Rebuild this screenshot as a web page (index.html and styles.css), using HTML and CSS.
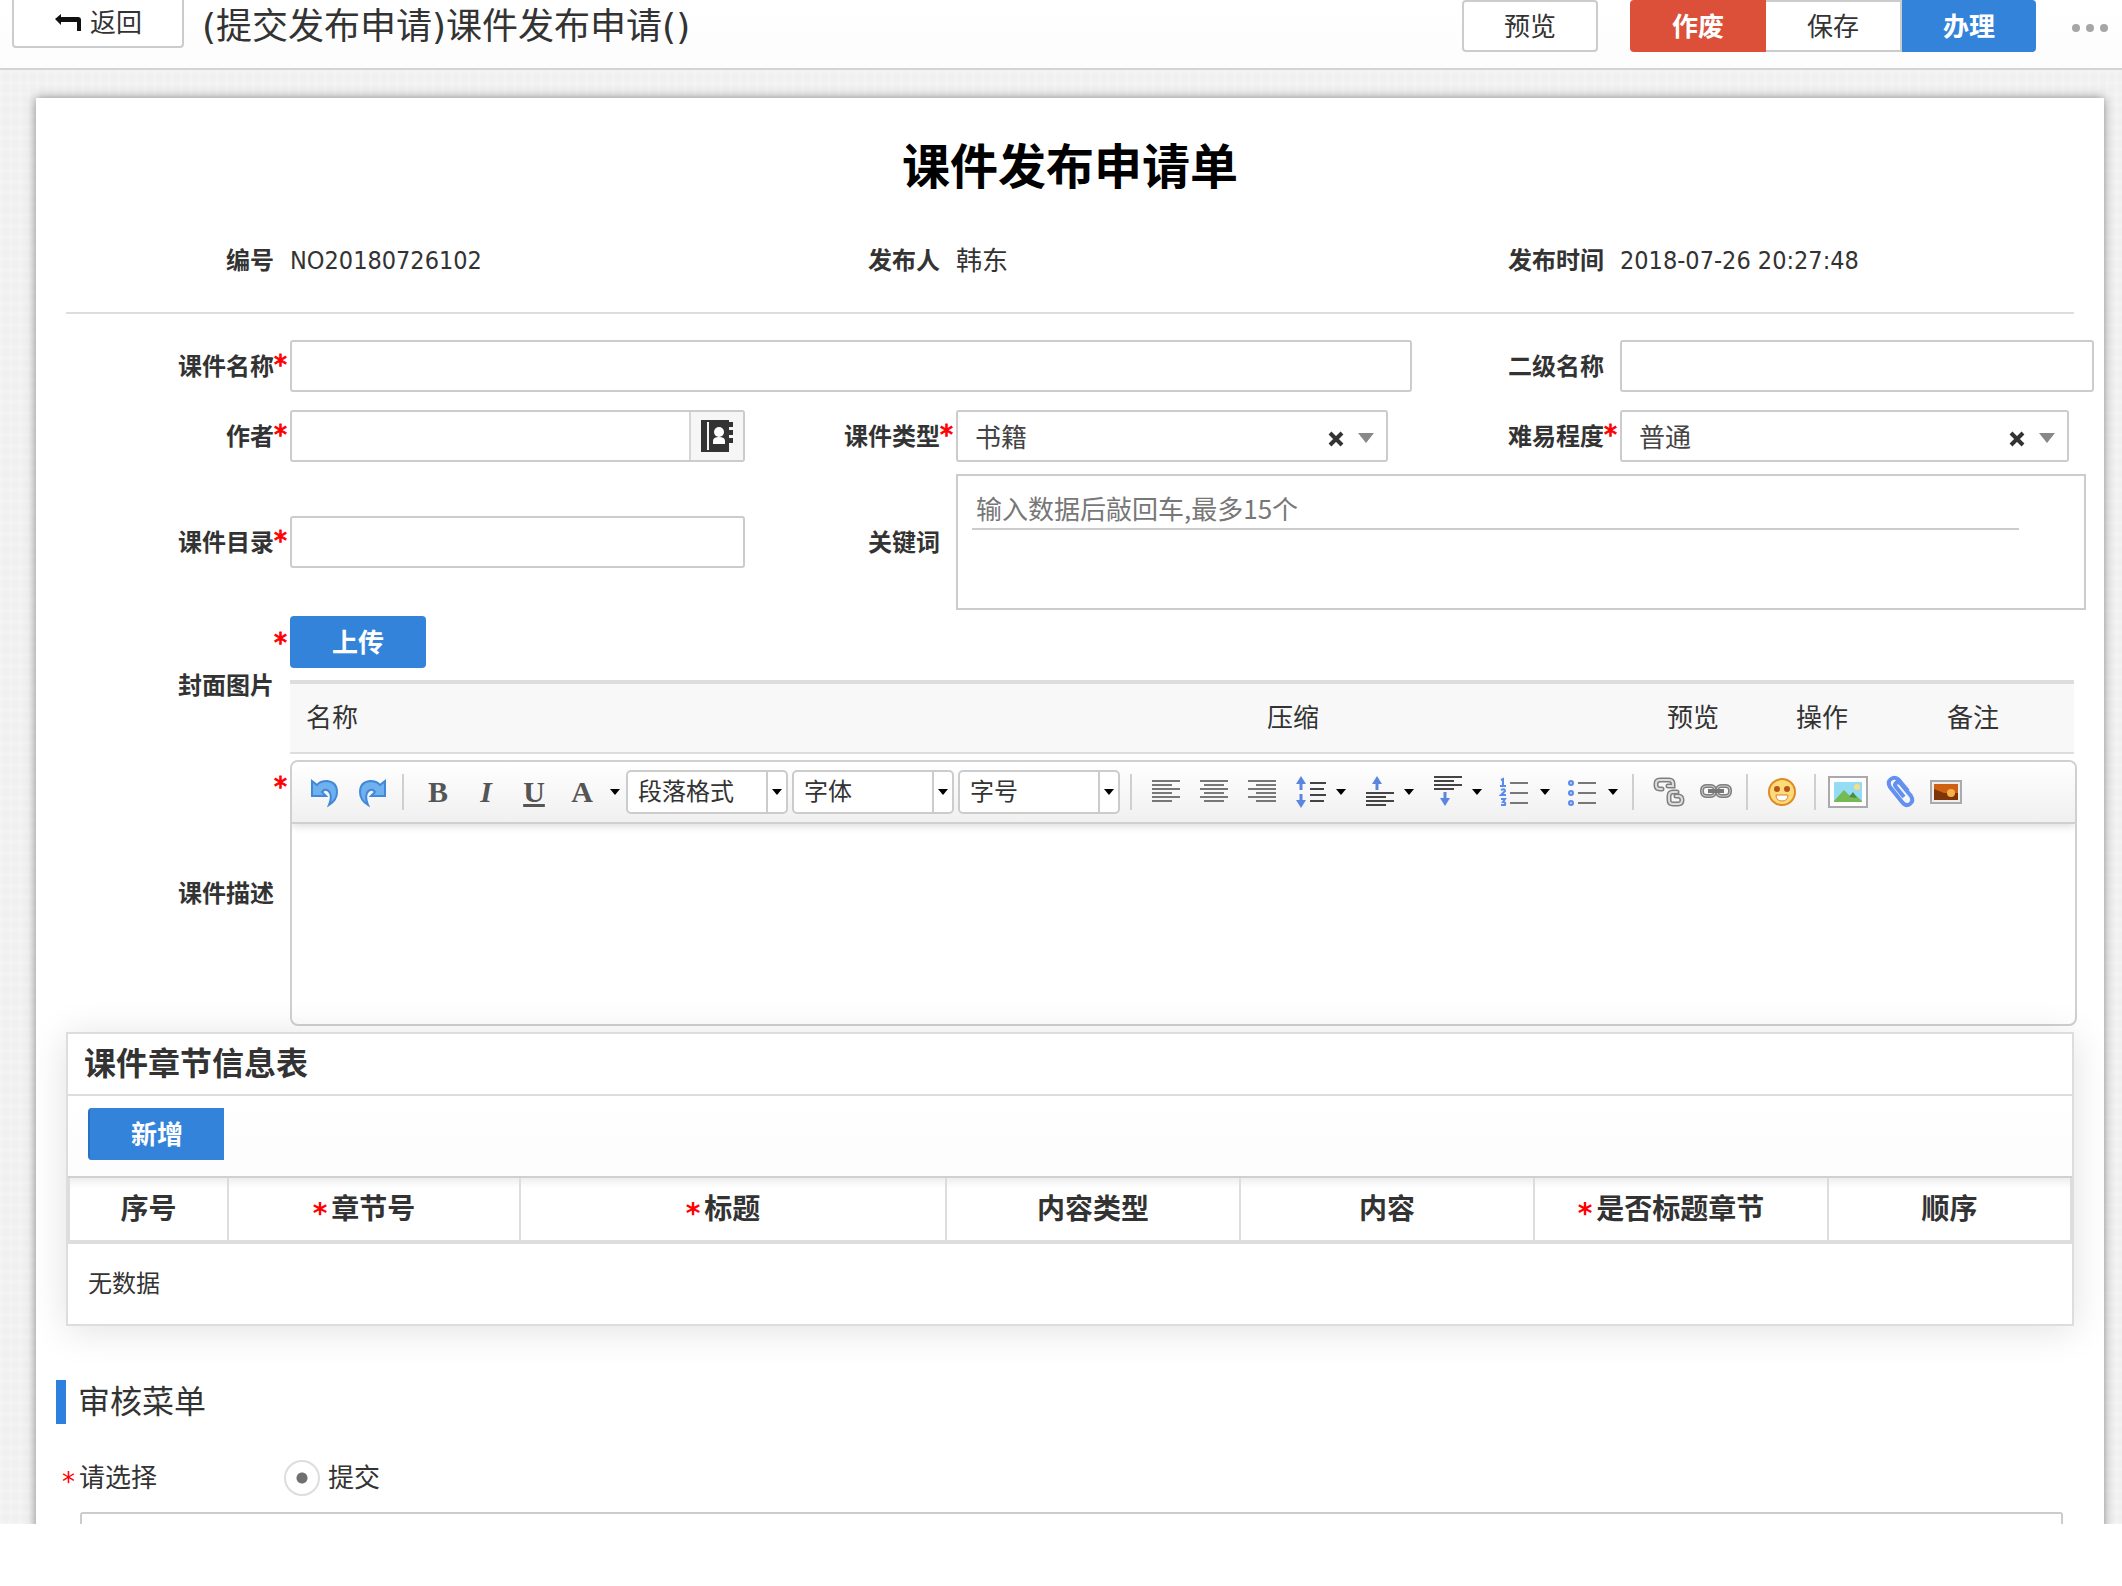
FILE: index.html
```html
<!DOCTYPE html>
<html lang="zh-CN">
<head>
<meta charset="utf-8">
<title>课件发布申请</title>
<link rel="stylesheet" href="styles.css">
</head>
<body>
<header class="topbar">
  <button class="btn btn-back" type="button">
    <svg width="28" height="20" viewBox="0 0 28 20"><path d="M1 6 7 1v3h17q3 0 3 3v11h-4V9H7v3z" fill="#111"/></svg>返回
  </button>
  <div class="page-title">(提交发布申请)课件发布申请()</div>
  <button class="btn" type="button">预览</button>
  <div class="btn-group">
    <button class="btn btn-danger" type="button">作废</button>
    <button class="btn btn-middle" type="button">保存</button>
    <button class="btn btn-primary" type="button">办理</button>
  </div>
  <button class="more" type="button" aria-label="更多"><i></i><i></i><i></i></button>
</header>

<main class="stage">
  <form class="sheet">
    <h1>课件发布申请单</h1>

    <div class="grid meta">
      <div class="label"><span>编号</span></div><div class="value number">NO20180726102</div>
      <div class="label"><span>发布人</span></div><div class="value">韩东</div>
      <div class="label"><span>发布时间</span></div><div class="value number">2018-07-26 20:27:48</div>
    </div>

    <div class="grid fields">
      <div class="label"><label for="name">课件名称</label><b class="star">*</b></div>
      <div class="cell span3"><input class="box" id="name" type="text"></div>
      <div class="label"><label for="sub">二级名称</label></div>
      <div class="cell bleed"><input class="box" id="sub" type="text"></div>

      <div class="label"><label for="author">作者</label><b class="star">*</b></div>
      <div class="cell">
        <div class="box picker">
          <input id="author" type="text">
          <button type="button" aria-label="选择人员">
            <svg width="32" height="32" viewBox="0 0 32 32"><path fill="#333" fill-rule="evenodd" d="M0 0h28v2h4v5h-4v3h4v5h-4v3h4v5h-4v9H0zM6 2h2v28H6z"/><circle cx="18" cy="12" r="5" fill="#fff"/><path d="M12 24v-3q0-4 6-4t6 4v3z" fill="#fff"/></svg>
          </button>
        </div>
      </div>
      <div class="label"><label for="type">课件类型</label><b class="star">*</b></div>
      <div class="cell inset">
        <div class="combo">
          <select class="box" id="type"><option>书籍</option></select>
          <button class="clear" type="button" aria-label="清除"><svg width="16" height="16" viewBox="0 0 16 16"><path d="M2 2l12 12M14 2 2 14" stroke="#333" stroke-width="4"/></svg></button>
          <svg class="caret" width="16" height="10" viewBox="0 0 16 10"><path d="M0 0h16L8 10z" fill="#888"/></svg>
        </div>
      </div>
      <div class="label"><label for="level">难易程度</label><b class="star">*</b></div>
      <div class="cell inset-small">
        <div class="combo">
          <select class="box" id="level"><option>普通</option></select>
          <button class="clear" type="button" aria-label="清除"><svg width="16" height="16" viewBox="0 0 16 16"><path d="M2 2l12 12M14 2 2 14" stroke="#333" stroke-width="4"/></svg></button>
          <svg class="caret" width="16" height="10" viewBox="0 0 16 10"><path d="M0 0h16L8 10z" fill="#888"/></svg>
        </div>
      </div>

      <div class="label"><label for="dir">课件目录</label><b class="star">*</b></div>
      <div class="cell middle"><input class="box" id="dir" type="text"></div>
      <div class="label"><label for="keys">关键词</label></div>
      <div class="cell span3 tight bleed-small"><div class="tags"><input id="keys" type="text" placeholder="输入数据后敲回车,最多15个"></div></div>

      <div class="label"><span>封面图片</span><b class="star star-top">*</b></div>
      <div class="cell span5 tight">
        <button class="btn btn-primary upload" type="button">上传</button>
        <table class="files">
          <colgroup><col class="f1"><col class="f2"><col class="f3"><col class="f4"><col class="f5"></colgroup>
          <thead><tr><th>名称</th><th>压缩</th><th>预览</th><th>操作</th><th>备注</th></tr></thead>
        </table>
      </div>

      <div class="label"><label for="desc">课件描述</label><b class="star star-top">*</b></div>
      <div class="cell span5 tight editor-cell">
        <div class="editor">
          <div class="toolbar">
            <button type="button" aria-label="撤销"><svg width="48" height="44" viewBox="298 770 48 44"><path d="M312 781l5 4q3-4 10-4 10 1 10 11 0 8-8 13 3-7 1-12-2-4-6-3l-2 2 4 4h-14z" fill="#6fb1ee" stroke="#4189d8" stroke-width="2"/></svg></button>
            <button type="button" aria-label="重做"><svg width="46" height="44" viewBox="346 770 46 44"><path d="M385 781l-5 4q-3-4-10-4-10 1-10 11 0 8 8 13-3-7-1-12 2-4 6-3l2 2-4 4h14z" fill="#6fb1ee" stroke="#4189d8" stroke-width="2"/></svg></button>
            <span class="sep"></span>
            <button class="glyph bold" type="button">B</button>
            <button class="glyph bold italic" type="button">I</button>
            <button class="glyph underline" type="button">U</button>
            <button class="glyph raised" type="button">A</button>
            <button class="drop" type="button" aria-label="文字颜色"><svg width="10" height="6" viewBox="0 0 10 6"><path d="M0 0h10L5 6z"/></svg></button>
            <div class="picks">
              <span class="pick"><select aria-label="段落格式"><option>段落格式</option></select><svg width="10" height="6" viewBox="0 0 10 6"><path d="M0 0h10L5 6z"/></svg></span>
              <span class="pick"><select aria-label="字体"><option>字体</option></select><svg width="10" height="6" viewBox="0 0 10 6"><path d="M0 0h10L5 6z"/></svg></span>
              <span class="pick"><select aria-label="字号"><option>字号</option></select><svg width="10" height="6" viewBox="0 0 10 6"><path d="M0 0h10L5 6z"/></svg></span>
            </div>
            <span class="sep"></span>
            <button type="button" aria-label="左对齐"><svg width="48" height="44" viewBox="1142 770 48 44"><path d="M1152 781h28M1152 785h20M1152 789h28M1152 793h20M1152 797h28M1152 801h20" stroke="#777" stroke-width="2"/></svg></button>
            <button type="button" aria-label="居中"><svg width="48" height="44" viewBox="1190 770 48 44"><path d="M1200 781h28M1204 785h20M1200 789h28M1204 793h20M1200 797h28M1204 801h20" stroke="#777" stroke-width="2"/></svg></button>
            <button type="button" aria-label="右对齐"><svg width="48" height="44" viewBox="1238 770 48 44"><path d="M1248 781h28M1256 785h20M1248 789h28M1256 793h20M1248 797h28M1256 801h20" stroke="#777" stroke-width="2"/></svg></button>
            <button type="button" aria-label="行距"><svg width="46" height="44" viewBox="1286 770 46 44"><path d="M1301 776l5 8h-3.500v6h-3v-6H1296zM1301 808l5-8h-3.500v-6h-3v6H1296z" fill="#5b86e0"/><path d="M1310 783h16M1310 789h14M1310 795h16M1310 801h14" stroke="#444" stroke-width="2"/></svg></button>
            <button class="drop" type="button" aria-label="行距选项"><svg width="10" height="6" viewBox="0 0 10 6"><path d="M0 0h10L5 6z"/></svg></button>
            <button type="button" aria-label="段前距"><svg width="50" height="44" viewBox="1350 770 50 44"><path d="M1377 776l5 8h-3.500v6h-3v-6H1372z" fill="#5b86e0"/><path d="M1366 793h28M1366 797h20M1366 801h28M1366 805h20" stroke="#444" stroke-width="2"/></svg></button>
            <button class="drop" type="button" aria-label="段前距选项"><svg width="10" height="6" viewBox="0 0 10 6"><path d="M0 0h10L5 6z"/></svg></button>
            <button type="button" aria-label="段后距"><svg width="50" height="44" viewBox="1418 770 50 44"><path d="M1445 806l5-8h-3.500v-6h-3v6H1440z" fill="#5b86e0"/><path d="M1434 777h28M1434 781h20M1434 785h28M1434 789h20" stroke="#444" stroke-width="2"/></svg></button>
            <button class="drop" type="button" aria-label="段后距选项"><svg width="10" height="6" viewBox="0 0 10 6"><path d="M0 0h10L5 6z"/></svg></button>
            <button type="button" aria-label="有序列表"><svg width="50" height="44" viewBox="1486 770 50 44"><path d="M1501 780l2-1v7m-3 0h6M1501 790q4-2 4 1l-4 4h5M1501 799h4l-2 3q3 0 2 3h-4" fill="none" stroke="#5b8aee" stroke-width="2"/><path d="M1510 783h18M1510 793h18M1510 803h18" stroke="#777" stroke-width="2"/></svg></button>
            <button class="drop" type="button" aria-label="有序列表选项"><svg width="10" height="6" viewBox="0 0 10 6"><path d="M0 0h10L5 6z"/></svg></button>
            <button type="button" aria-label="无序列表"><svg width="50" height="44" viewBox="1554 770 50 44"><g fill="#c5d6fb" stroke="#5b8aee" stroke-width="2"><circle cx="1571" cy="783" r="2"/><circle cx="1571" cy="793" r="2"/><circle cx="1571" cy="803" r="2"/></g><path d="M1578 783h18M1578 793h18M1578 803h18" stroke="#777" stroke-width="2"/></svg></button>
            <button class="drop" type="button" aria-label="无序列表选项"><svg width="10" height="6" viewBox="0 0 10 6"><path d="M0 0h10L5 6z"/></svg></button>
            <span class="sep"></span>
            <button type="button" aria-label="取消链接"><svg width="46" height="44" viewBox="1644 770 46 44"><g fill="none" stroke-linecap="round"><path d="M1662 789h-2q-4 0-4-4v-1q0-4 4-4h9q4 0 4 4v2h-5M1677 792h-4q-4 0-4 4v4q0 4 4 4h5q4 0 4-4t-4-4h-2" stroke="#808080" stroke-width="5"/><path d="M1662 789h-2q-4 0-4-4v-1q0-4 4-4h9q4 0 4 4v2h-5M1677 792h-4q-4 0-4 4v4q0 4 4 4h5q4 0 4-4t-4-4h-2" stroke="#ddd" stroke-width="2"/></g></svg></button>
            <button type="button" aria-label="链接"><svg width="46" height="44" viewBox="1690 770 46 44"><g fill="none"><rect x="1702" y="786" width="13" height="10" rx="4" stroke="#808080" stroke-width="4"/><rect x="1717" y="786" width="13" height="10" rx="4" stroke="#808080" stroke-width="4"/><rect x="1702" y="786" width="13" height="10" rx="4" stroke="#ccc"/><rect x="1717" y="786" width="13" height="10" rx="4" stroke="#ccc"/><path d="M1708 791h16" stroke="#777" stroke-width="4"/></g></svg></button>
            <span class="sep"></span>
            <button type="button" aria-label="表情"><svg width="46" height="44" viewBox="1758 770 46 44"><circle cx="1782" cy="792" r="13" fill="#fbdc78" stroke="#e08a26" stroke-width="2"/><circle cx="1777" cy="789" r="3" fill="#b9531c"/><circle cx="1787" cy="789" r="3" fill="#b9531c"/><path d="M1776 795h12q0 6-6 6t-6-6z" fill="#fff" stroke="#d9822b" stroke-width="1"/></svg></button>
            <span class="sep"></span>
            <button type="button" aria-label="图片"><svg width="48" height="44" viewBox="1826 770 48 44"><path d="M1829 777h38v30h-38z" fill="#fff" stroke="#aaa" stroke-width="2"/><path d="M1834 782h28v20h-28z" fill="#94dcf3"/><path d="M1834 801l10-11 6 6 3-3 9 8v1h-28z" fill="#76b955"/><path d="M1849 797l4-5 4 6z" fill="#4c8a45"/><circle cx="1857" cy="787" r="3" fill="#f7dd8a"/></svg></button>
            <button type="button" aria-label="附件"><svg width="48" height="44" viewBox="1874 770 48 44"><path d="M1908 791l-9-11q-4-4-8-1t-1 8l12 15q4 5 8 2t1-8l-10-12q-3-3-5-1t0 4l8 10" fill="none" stroke="#6490f0" stroke-width="4"/></svg></button>
            <button type="button" aria-label="插图"><svg width="48" height="44" viewBox="1922 770 48 44"><path d="M1931 781h30v22h-30z" fill="#eee" stroke="#aaa" stroke-width="2"/><path d="M1934 784h24v16h-24z" fill="#cf6113"/><path d="M1934 789l10 4h14v7h-24z" fill="#7d3408"/><circle cx="1951" cy="793" r="4" fill="#f6b04a"/></svg></button>
          </div>
          <textarea id="desc"></textarea>
        </div>
      </div>
    </div>

    <section class="panel">
      <h2>课件章节信息表</h2>
      <div class="panel-tools"><button class="btn btn-primary btn-add" type="button">新增</button></div>
      <table class="chapters">
        <colgroup><col class="c1"><col class="c2"><col class="c3"><col class="c4"><col class="c4"><col class="c4"><col class="c5"></colgroup>
        <thead><tr><th>序号</th><th class="required"><b>*</b>章节号</th><th class="required"><b>*</b>标题</th><th>内容类型</th><th>内容</th><th class="required"><b>*</b>是否标题章节</th><th>顺序</th></tr></thead>
        <tbody><tr><td colspan="7">无数据</td></tr></tbody>
      </table>
    </section>

    <section class="review">
      <h3>审核菜单</h3>
      <div class="choice">
        <span class="choice-label"><b>*</b>请选择</span>
        <label><input type="radio" name="act" checked>提交</label>
      </div>
      <textarea class="opinion" aria-label="审核意见"></textarea>
    </section>
  </form>
</main>
</body>
</html>
```
FILE: styles.css
```css
* { box-sizing: border-box; }

body {
  margin: 0;
  height: 100vh;
  padding-bottom: 62px;
  display: flex;
  flex-direction: column;
  overflow: hidden;
  background: #fff;
  color: #333;
  font: 26px/36px "DejaVu Sans Condensed", "Noto Sans CJK SC", sans-serif;
}

button, input, select, textarea {
  font: inherit;
  color: inherit;
  margin: 0;
  padding: 0;
  border: 0;
  background: none;
  border-radius: 0;
  outline: 0;
}
select { appearance: none; }
svg { display: block; }

.topbar {
  flex: none;
  display: flex;
  align-items: flex-start;
  height: 70px;
  padding: 0 10px 0 12px;
  border-bottom: 2px solid #d3d3d3;
  background: linear-gradient(#fff, #fcfcfc);
}
.page-title {
  flex: 1;
  padding-left: 18px;
  font-family: "DejaVu Sans", "Noto Sans CJK SC", sans-serif;
  font-size: 36px;
  line-height: 54px;
}
.btn {
  width: 136px;
  height: 52px;
  padding-top: 2px;
  border: 2px solid #ccc;
  border-radius: 4px;
  background: #fff;
}
.btn-back {
  display: flex;
  align-items: center;
  justify-content: center;
  gap: 8px;
  width: 172px;
  height: 48px;
  padding-top: 0;
  border-top: 0;
  border-radius: 0 0 4px 4px;
}
.btn-group { display: flex; margin: 0 32px; }
.btn-danger, .btn-primary { border: 0; color: #fff; font-weight: bold; }
.btn-danger { background: #dc5039; border-radius: 4px 0 0 4px; }
.btn-primary { background: #3383da; }
.btn-middle { border-radius: 0; border-left: 0; }
.btn-group .btn-primary { width: 134px; border-radius: 0 4px 4px 0; }
.more { display: flex; gap: 6px; padding: 24px 4px; }
.more i { width: 8px; height: 8px; border-radius: 50%; background: #a6a6a6; }

.stage {
  flex: 1;
  min-height: 0;
  overflow: hidden;
  padding: 28px 18px 0 36px;
  background:
    repeating-linear-gradient(90deg, rgba(255,255,255,.15) 0 3px, transparent 3px 9px),
    repeating-linear-gradient(rgba(255,255,255,.15) 0 4px, transparent 4px 11px),
    #f0f0f0;
}
.sheet {
  padding: 33px 30px 60px;
  background: #fff;
  box-shadow: 0 0 10px rgba(0,0,0,.45);
}
h1 {
  margin: 0;
  font-size: 48px;
  line-height: 72px;
  text-align: center;
  color: #000;
}

.grid {
  display: grid;
  grid-template-columns: minmax(0, 224fr) minmax(0, 455fr) minmax(0, 211fr) minmax(0, 456fr) minmax(0, 208fr) minmax(0, 454fr);
}
.meta { padding: 40px 0 33px; border-bottom: 2px solid #ddd; }
.number { font-size: 25px; }
.fields { padding-top: 17px; }
.label {
  position: relative;
  display: flex;
  align-items: center;
  justify-content: flex-end;
  padding: 2px 16px 0 0;
  font-size: 24px;
  font-weight: bold;
}
.star {
  position: absolute;
  right: 3px;
  padding-bottom: 4px;
  color: #f00;
  font-family: "DejaVu Sans", sans-serif;
  font-size: 26px;
  font-weight: normal;
  -webkit-text-stroke: 1px #f00;
}
.meta .label { padding-top: 0; }
.star-top { top: 12px; }
.cell { padding: 9px 0; }
.middle { align-self: center; }
.tight { padding: 3px 0; }
.span3 { grid-column: span 3; }
.span5 { grid-column: span 5; }
.bleed { margin-right: -20px; }
.bleed-small { margin-right: -12px; }
.inset { margin-right: 24px; }
.inset-small { margin-right: 5px; }

.box {
  display: block;
  width: 100%;
  height: 52px;
  padding: 0 17px;
  border: 2px solid #ccc;
  border-radius: 3px;
  background: #fff;
}
.picker { display: flex; padding: 0; }
.picker input { flex: 1; min-width: 0; padding: 0 17px; }
.picker button {
  display: flex;
  align-items: center;
  justify-content: center;
  width: 54px;
  border-left: 2px solid #d5d5d5;
  background: #f6f6f6;
}
.combo { position: relative; color: #444; }
.combo select { padding-top: 4px; }
.clear { position: absolute; right: 44px; top: 21px; }
.caret { position: absolute; right: 14px; top: 23px; }

.tags {
  height: 136px;
  padding: 12px 65px 12px 14px;
  border: 2px solid #ccc;
  background: #fff;
}
.tags input {
  display: block;
  width: 100%;
  height: 42px;
  padding: 0 4px 2px;
  border-bottom: 2px solid #ccc;
  font-family: "Noto Sans CJK SC", sans-serif;
}
.tags input::placeholder { color: #777; opacity: 1; }

.upload { display: block; margin-bottom: 12px; border-radius: 4px; }
.files {
  width: 100%;
  table-layout: fixed;
  border-collapse: separate;
  border-spacing: 0;
}
.files th {
  height: 74px;
  padding: 0 16px;
  border-top: 4px solid #ddd;
  border-bottom: 2px solid #ddd;
  background: #f8f8f8;
  text-align: left;
  font-weight: normal;
}
.f1 { width: 961px; }
.f2 { width: 400px; }
.f3 { width: 129px; }
.f4 { width: 151px; }
.f5 { width: 143px; }

.editor-cell { margin-right: -3px; }
.editor {
  height: 266px;
  border: 2px solid #d0d0d0;
  border-radius: 8px;
  background: #fff;
  overflow: hidden;
}
.toolbar {
  display: flex;
  align-items: center;
  height: 62px;
  padding-left: 6px;
  border-bottom: 2px solid #d0d0d0;
  background: linear-gradient(#fff, #f0f0f0);
  box-shadow: 0 2px 8px rgba(0,0,0,.15);
}
.toolbar > * { flex: none; }
.editor textarea { display: block; width: 100%; height: 200px; resize: none; }
.sep { width: 2px; height: 36px; margin: 0 10px; background: #cfcfd2; }
.glyph {
  width: 48px;
  height: 44px;
  color: #555;
  font: 30px/44px "Liberation Serif", serif;
}
.bold { font-weight: bold; }
.italic { font-style: italic; }
.underline { text-decoration: underline; font-weight: bold; }
.raised { font-weight: bold; padding-bottom: 6px; }
.drop { display: flex; align-items: center; justify-content: center; width: 18px; height: 44px; }
.picks { display: flex; gap: 4px; margin-left: 2px; }
.pick {
  display: flex;
  align-items: center;
  width: 162px;
  height: 44px;
  padding-right: 4px;
  border: 2px solid #ccc;
  border-radius: 5px;
  background: #fff;
}
.pick select {
  flex: 1;
  min-width: 0;
  height: 40px;
  margin-right: 4px;
  padding-left: 10px;
  border-right: 2px solid #ccc;
  font-size: 24px;
}

.panel {
  position: relative;
  margin-top: 3px;
  border: 2px solid #ddd;
  background: #fff;
  box-shadow: 0 4px 36px rgba(0,0,0,.12);
}
h2 {
  margin: 0;
  padding: 0 16px;
  font-size: 32px;
  line-height: 60px;
  border-bottom: 2px solid #ddd;
}
.panel-tools {
  padding: 12px 20px 16px;
  border-bottom: 2px solid #d0d0d0;
  background: linear-gradient(#fff, #fcfcfc);
}
.btn-add { display: block; border-radius: 4px 0 0 4px; border-left: 2px solid #2671c4; }
.chapters {
  width: 100%;
  table-layout: fixed;
  border-collapse: separate;
  border-spacing: 0;
}
.chapters th {
  height: 66px;
  padding: 2px 0 0;
  border-right: 2px solid #ddd;
  border-bottom: 4px solid #ddd;
  background: linear-gradient(#eee, #fff 10px);
  font-size: 28px;
}
.chapters .required { padding-right: 20px; }
.chapters th:first-child { border-left: 2px solid #ddd; }
.chapters th b {
  margin-right: 4px;
  color: #f00;
  font-family: "DejaVu Sans", sans-serif;
  line-height: 28px;
  vertical-align: -4px;
}
.chapters td { height: 80px; padding: 0 20px; font-size: 24px; }
.c1 { width: 161px; }
.c2 { width: 292px; }
.c3 { width: 426px; }
.c4 { width: 294px; }
.c5 { width: 243px; }

.review { margin: 54px 11px 0 -10px; }
h3 {
  margin: 0;
  padding-left: 12px;
  border-left: 10px solid #2d80dd;
  font-size: 32px;
  line-height: 44px;
  font-weight: normal;
}
.choice { display: flex; align-items: center; padding: 36px 0 16px; }
.choice-label { width: 228px; padding-left: 6px; }
.choice-label b {
  margin-right: 4px;
  color: #f00;
  font-family: "DejaVu Sans", sans-serif;
  line-height: 26px;
  font-weight: normal;
  vertical-align: -4px;
}
.choice label { display: flex; align-items: center; gap: 8px; }
.choice input {
  appearance: none;
  width: 36px;
  height: 36px;
  border: 2px solid #ddd;
  border-radius: 50%;
  background: radial-gradient(circle, #707070 5px, #fff 6px);
}
.opinion {
  display: block;
  width: calc(100% - 24px);
  height: 120px;
  margin-left: 24px;
  border: 2px solid #ccc;
  border-radius: 3px;
  resize: none;
}
```
